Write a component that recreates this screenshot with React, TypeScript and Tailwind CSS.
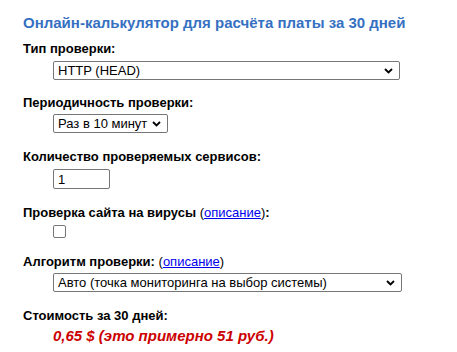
import React from 'react';

function Chevron() {
  return (
    <svg
      className="pointer-events-none absolute right-[7px] top-1/2 -translate-y-1/2"
      width="9"
      height="6"
      viewBox="0 0 9 6"
    >
      <path d="M1 1 L4.5 4.5 L8 1" fill="none" stroke="#000" strokeWidth="1.8" />
    </svg>
  );
}

function Select({ value, width }: { value: string; width: string }) {
  return (
    <div className={`relative ${width}`}>
      <select
        defaultValue={value}
        className="block h-[19px] w-full appearance-none rounded-[2px] border border-[#767676] bg-white pl-[4px] text-[13px] leading-[17px] text-black outline-none"
      >
        <option>{value}</option>
      </select>
      <Chevron />
    </div>
  );
}

export default function App() {
  return (
    <div className="bg-white pl-[23px] pt-[14px] text-black" style={{ fontFamily: '"Liberation Sans", Arial, sans-serif' }}>
      <h3 className="text-[15px] font-bold leading-[18px] text-[#3670c2]">
        Онлайн-калькулятор для расчёта платы за 30 дней
      </h3>

      <div className="mt-[9px] text-[13px] font-bold leading-[16px]">Тип проверки:</div>
      <div className="mt-[4px] pl-[30px]">
        <Select value="HTTP (HEAD)" width="w-[347px]" />
      </div>

      <div className="mt-[15px] text-[13px] font-bold leading-[16px]">Периодичность проверки:</div>
      <div className="mt-[3px] pl-[30px]">
        <Select value="Раз в 10 минут" width="w-[115px]" />
      </div>

      <div className="mt-[16px] text-[13px] font-bold leading-[16px]">Количество проверяемых сервисов:</div>
      <div className="mt-[4px] pl-[30px]">
        <input
          type="text"
          defaultValue="1"
          className="block h-[20px] w-[57px] rounded-[2px] border border-[#767676] bg-white pl-[4px] text-[13px] text-black outline-none"
        />
      </div>

      <div className="mt-[16px] text-[13px] leading-[16px]">
        <b>Проверка сайта на вирусы</b> (
        <a href="#" className="text-[#0000ee] underline">
          описание
        </a>
        )<b>:</b>
      </div>
      <div className="mt-[4px] flex pl-[30px]">
        <span className="block h-[13px] w-[13px] rounded-[2px] border border-[#767676] bg-white" />
      </div>

      <div className="mt-[16px] text-[13px] leading-[16px]">
        <b>Алгоритм проверки:</b> (
        <a href="#" className="text-[#0000ee] underline">
          описание
        </a>
        )
      </div>
      <div className="mt-[3px] pl-[30px]">
        <Select value="Авто (точка мониторинга на выбор системы)" width="w-[349px]" />
      </div>

      <div className="mt-[16px] text-[13px] font-bold leading-[16px]">Стоимость за 30 дней:</div>
      <div className="mt-[3px] pl-[30px] text-[15px] font-bold italic leading-[18px] text-[#cc0000]">
        0,65 $ (это примерно 51 руб.)
      </div>
    </div>
  );
}
